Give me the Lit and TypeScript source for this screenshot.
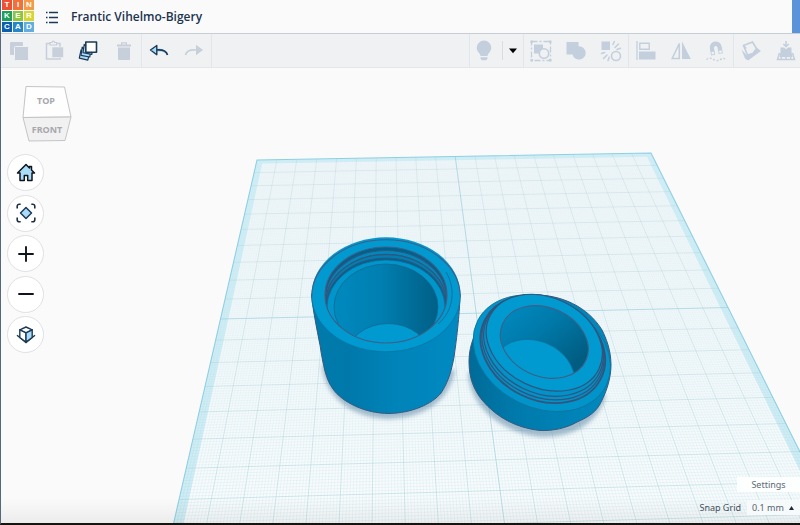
import { LitElement, html, svg, css } from "lit";
import type { TemplateResult } from "lit";
import { customElement } from "lit/decorators.js";

type Pt = [number, number];

/** Projective map from the unit square to four screen corners. */
function project(p00: Pt, p10: Pt, p01: Pt, p11: Pt) {
  const sx = p00[0] - p10[0] + p11[0] - p01[0];
  const sy = p00[1] - p10[1] + p11[1] - p01[1];
  const dx1 = p10[0] - p11[0], dy1 = p10[1] - p11[1];
  const dx2 = p01[0] - p11[0], dy2 = p01[1] - p11[1];
  const det = dx1 * dy2 - dx2 * dy1;
  const g = (sx * dy2 - dx2 * sy) / det;
  const h = (dx1 * sy - sx * dy1) / det;
  const a = p10[0] - p00[0] + g * p10[0], b = p01[0] - p00[0] + h * p01[0];
  const d = p10[1] - p00[1] + g * p10[1], e = p01[1] - p00[1] + h * p01[1];
  return (u: number, v: number) => {
    const w = g * u + h * v + 1;
    return `${((a * u + b * v + p00[0]) / w).toFixed(2)} ${((d * u + e * v + p00[1]) / w).toFixed(2)}`;
  };
}

// The corners describe the far half of the workplane, so v runs 0..2.
const plane = project([257, 160], [651, 153], [220.5, 319], [728, 307.5]);

function gridPath(step: number, skip: number): string {
  let d = "";
  const n = Math.round(1 / step);
  for (let i = 1; i < n; i++) {
    if (i % skip === 0) continue;
    const t = i * step;
    d += `M${plane(t, 0)}L${plane(t, 2)}M${plane(0, t * 2)}L${plane(1, t * 2)}`;
  }
  return d;
}
const quad = (m: number) =>
  `M${plane(m, m * 2)}L${plane(1 - m, m * 2)}L${plane(1 - m, 2 - m * 2)}L${plane(m, 2 - m * 2)}Z`;

const FINE = gridPath(1 / 200, 10);
const CELLS = gridPath(1 / 20, 10);
const AXES = `M${plane(0.5, 0)}L${plane(0.5, 2)}M${plane(0, 1)}L${plane(1, 1)}`;

const ICONS: Record<string, TemplateResult> = {
  copy: svg`<rect x="3" y="3" width="13" height="13" rx="1" fill="#c7d0da"/><rect x="7.5" y="7.5" width="14" height="14" rx="1" fill="#c7d0da" stroke="#f0f1f3"/>`,
  paste: svg`<path d="M8 4.5H4.5v15.500H18V4.500H15" fill="none" stroke="#c7d0da" stroke-width="1.500"/><path d="M8 6V3.500h2a1.300 1.300 0 0 1 2.600 0h2V6z" fill="#f0f1f3" stroke="#c7d0da" stroke-width="1.200"/><rect x="10" y="8" width="11.500" height="10.500" fill="#c7d0da" stroke="#f0f1f3" stroke-width=".6"/>`,
  duplicate: svg`<g stroke="#1c3a58" stroke-width="1.200" fill="#a9dcf8" stroke-linejoin="round"><path d="M4 11 2.300 19.200l8.500 2 1-4z"/><path d="M5.200 8.200 4 16.400l8.800 1.600.6-4z"/><path d="M7.200 5.500 6 13.700l8.800 1.600.5-3z"/><path d="M8.800 3h10.700v10.300H8.800z" fill="#fff" stroke-width="1.600"/></g>`,
  trash: svg`<path d="M5 5.500h4V3.300h6v2.200h4V7.500H5zM10.300 4.500v1h3.400v-1zM6 8.500h12V20a1 1 0 0 1-1 1H7a1 1 0 0 1-1-1z" fill="#c7d0da" fill-rule="evenodd"/>`,
  undo: svg`<path d="M9.500 9.500C16 9 20 11.500 20.500 16c-2.500-3-6-3.800-11-3.500z" fill="#a9dcf8"/><path d="M9.500 11C16 10.500 19.500 12 20.500 16" fill="none" stroke="#1c3a58" stroke-width="1.700"/><path d="M9.800 6.500 3.500 11l6.300 4.700z" fill="#a9dcf8" stroke="#1c3a58" stroke-width="1.400" stroke-linejoin="round"/>`,
  redo: svg`<path d="M14 11C8 10.500 4.500 12 3.500 16" fill="none" stroke="#c7d0da" stroke-width="1.700"/><path d="M14 5.800 21 11l-7 5.200z" fill="#c7d0da"/>`,
  bulb: svg`<path d="M12 1.500a7.300 7.300 0 0 1 7.300 7.300c0 4-3.300 5-3.800 8.200H8.500C8 13.800 4.700 12.800 4.700 8.800A7.300 7.300 0 0 1 12 1.500zM8.500 18.200h7v1.500l-1.500 1.500h-4l-1.500-1.500z" fill="#c3cfdc"/>`,
  group: svg`<rect x="2.500" y="2.500" width="19" height="19" fill="none" stroke="#c3cfdc" stroke-width="1.300" stroke-dasharray="6 2 2 2"/><path d="M1.500 1.500h2.500v2.500H1.500zM20 1.500h2.500v2.500H20zM1.500 20h2.500v2.500H1.500zM20 20h2.500v2.500H20z" fill="#c3cfdc"/><path d="M5 5.500h9v9H5z" fill="#c3cfdc"/><circle cx="15" cy="14.500" r="4.700" fill="#f0f1f3" stroke="#c3cfdc" stroke-width="1.600"/>`,
  union: svg`<path d="M2.500 3h12v4.200A6.700 6.700 0 1 1 8.500 15.500h-6z" fill="#c3cfdc"/>`,
  ungroup: svg`<path d="M2.500 2.500h8.500v8.500H2.500z" fill="#c3cfdc"/><circle cx="17" cy="17" r="4.500" fill="none" stroke="#c3cfdc" stroke-width="1.600"/><path d="M14 5.500l1.300-3M16 8.500l3.500-3.500M18 10.500l3.500-1.200M2.500 14.500l3.200-1M4.500 19.500l3.500-3.500M9 21.500l1.200-3.200" stroke="#c3cfdc" stroke-width="1.500" stroke-linecap="round"/>`,
  align: svg`<path d="M3 2v19" stroke="#c3cfdc" stroke-width="1.300"/><path d="M5.800 4.200h9.400v6H5.800z" fill="none" stroke="#c3cfdc" stroke-width="1.400"/><path d="M5 12.500h16.500v8H5z" fill="#c3cfdc"/>`,
  mirror: svg`<path d="M10.300 4.500v15H3.200z" fill="none" stroke="#c3cfdc" stroke-width="1.500"/><path d="M13 2.500 21.800 20H13z" fill="#c3cfdc"/>`,
  magnet: svg`<g transform="rotate(-10 12 10)"><path d="M6 15.500V8.500a6 6 0 0 1 12 0v7h-4.200V8.700a1.800 1.800 0 0 0-3.600 0v6.800z" fill="#c3cfdc"/><path d="M6.900 12.200h2.400v2.500H6.900zM14.700 12.200h2.400v2.500h-2.400z" fill="#f0f1f3"/></g><path d="M2.500 20.500C5 18.500 7.500 19 9.500 20.500s5 1.500 7 0 4-1.500 5.500 0" fill="none" stroke="#c3cfdc" stroke-width="1.400" stroke-dasharray="1.800 1.800"/>`,
  plane: svg`<path d="M2.500 10.500 6 19.500 9 21.500 22 12l-4.500-3.500-3 5-6.500 3z" fill="#c3cfdc"/><path d="M4.500 6.500 13.500 3l4 6.500-3.500 5-5.500 1.500z" fill="#f0f1f3" stroke="#c3cfdc" stroke-width="1.600"/><path d="M4.500 6.500l2.800 3" stroke="#c3cfdc" stroke-width="1.300"/>`,
  drop: svg`<path d="M12 2v5M9.300 5 12 7.500 14.700 5" fill="none" stroke="#c3cfdc" stroke-width="1.500"/><path d="M6.500 8.500h3.500l2 1.800 2-1.800h3.500v4.500l1 5h-13l1-5z" fill="#c3cfdc"/><path d="M5.500 14 3.500 20.500h17L18.500 14M7 20.500l.5-3M12 17v3.500M17 20.500l-.5-3" fill="none" stroke="#c3cfdc" stroke-width="1.500"/>`,
  home: svg`<path d="M12 3.500 3.500 12H6v7.500h4.300v-5h3.400v5H18V12h2.500L17.500 9V5.500h-2V7z" fill="#a9dcf8" stroke="#10151c" stroke-width="1.500" stroke-linejoin="round"/>`,
  fit: svg`<path d="M3.200 7.500V5.200a2 2 0 0 1 2-2h1.500M17.300 3.200h1.500a2 2 0 0 1 2 2v2.300M20.800 16.500v2.300a2 2 0 0 1-2 2h-1.500M6.700 20.800H5.200a2 2 0 0 1-2-2v-2.300" fill="none" stroke="#1c2f45" stroke-width="1.600"/><path d="M12 6.500 17.500 12 12 17.500 6.500 12z" fill="#a9dcf8" stroke="#1c3a58" stroke-width="1.500" stroke-linejoin="round"/>`,
  plus: svg`<path d="M12 5v14M5 12h14" stroke="#10151c" stroke-width="1.900" stroke-linecap="round"/>`,
  minus: svg`<path d="M5 12h14" stroke="#10151c" stroke-width="1.900" stroke-linecap="round"/>`,
  ortho: svg`<path d="M3 12.200 12 19.500 21 12.200" fill="none" stroke="#1c3a58" stroke-width="1.400"/><g stroke="#1c3a58" stroke-width="1.400" stroke-linejoin="round"><path d="M12 4 18.200 6.800 12 9.800 5.800 6.800z" fill="#fff"/><path d="M5.800 6.800 12 9.800v9.200l-6.200-4.500z" fill="#fff"/><path d="M18.200 6.800 12 9.800v9.200l6.200-4.500z" fill="#a9dcf8"/></g>`,
  list: svg`<path d="M9 7.500h9M9 12.500h9M9 17.500h9" stroke="#1c3a58" stroke-width="1.300"/><path d="M6 7.500h1.500M6 12.500h1.500M6 17.500h1.500" stroke="#1c3a58" stroke-width="1.300"/>`,
  caret: svg`<path d="M8 9.500h8l-4 4.800z" fill="#000"/>`,
};

const icon = (name: string) =>
  html`<svg class="icon" viewBox="0 0 24 24" aria-hidden="true">${ICONS[name]}</svg>`;

@customElement("work-scene")
export class WorkScene extends LitElement {
  static styles = css`
    :host { display: block; }
    .scene { display: block; width: 100%; height: 100%; }
    .edge { fill: none; stroke: #3f5f86; stroke-width: 1.1; }
  `;

  render() {
    return html`<svg class="scene" viewBox="0 68 800 455" preserveAspectRatio="xMinYMin slice" role="img" aria-label="Workplane with a threaded jar and lid">
      <defs>
        <linearGradient id="body" x1="0" x2="1"><stop offset="0" stop-color="#007aac"/><stop offset=".25" stop-color="#0078aa"/><stop offset=".55" stop-color="#0083b8"/><stop offset="1" stop-color="#008ac2"/></linearGradient>
        <linearGradient id="bore" x1="0" x2="1"><stop offset="0" stop-color="#0089be"/><stop offset=".45" stop-color="#007fb1"/><stop offset=".8" stop-color="#006a94"/><stop offset="1" stop-color="#006088"/></linearGradient>
        <linearGradient id="lidbody" x1="0" x2="1"><stop offset="0" stop-color="#006b98"/><stop offset=".3" stop-color="#0079aa"/><stop offset="1" stop-color="#0089bf"/></linearGradient>
        <linearGradient id="lidbore" x1="0" x2="1" y2=".4"><stop offset="0" stop-color="#008cc3"/><stop offset=".5" stop-color="#0078a8"/><stop offset="1" stop-color="#005c80"/></linearGradient>
        <linearGradient id="haze" x1="0" x2="0" y1="0" y2="1"><stop offset="0" stop-color="#888" stop-opacity="0"/><stop offset="1" stop-color="#888" stop-opacity=".12"/></linearGradient>
        <linearGradient id="floorplane" gradientUnits="userSpaceOnUse" x1="0" x2="0" y1="153" y2="523"><stop offset="0" stop-color="#ecf4f7"/><stop offset=".5" stop-color="#f1f8fa"/><stop offset="1" stop-color="#f9fcfd"/></linearGradient>
        <linearGradient id="fineline" gradientUnits="userSpaceOnUse" x1="0" x2="0" y1="153" y2="523"><stop offset="0" stop-color="#7fb9c8" stop-opacity=".01"/><stop offset=".4" stop-color="#7fb9c8" stop-opacity=".06"/><stop offset="1" stop-color="#7fb9c8" stop-opacity=".17"/></linearGradient>
        <linearGradient id="cellline" gradientUnits="userSpaceOnUse" x1="0" x2="0" y1="153" y2="523"><stop offset="0" stop-color="#a5c6cd" stop-opacity=".28"/><stop offset="1" stop-color="#96cbd4" stop-opacity=".5"/></linearGradient>
        <filter id="soft" x="-20%" y="-20%" width="140%" height="140%"><feGaussianBlur stdDeviation="2"/></filter>
        <clipPath id="mouth"><ellipse cx="386" cy="295" rx="61" ry="48"/></clipPath>
        <clipPath id="borehole"><ellipse cx="386" cy="307" rx="52" ry="43"/></clipPath>
        <clipPath id="lidhole"><ellipse rx="45.500" ry="34.400" transform="translate(544.300 342) rotate(23)"/></clipPath>
      </defs>

      <path d=${quad(0)} fill="#cfedf5"/>
      <path d=${quad(0.015)} fill="url(#floorplane)"/>
      <path d=${FINE} fill="none" stroke="url(#fineline)" stroke-width=".7"/>
      <path d=${CELLS} fill="none" stroke="url(#cellline)" stroke-width=".9"/>
      <path d=${AXES} fill="none" stroke="#94cbd8" stroke-opacity=".65" stroke-width="1"/>
      <path d=${quad(0)} fill="none" stroke="#8fcfe3" stroke-width="1.100"/>

      <g filter="url(#soft)" fill="#6d93ad" fill-opacity=".6">
        <path d="M322 365C324 395 350 418 388 419 425 418 450 400 455 370z"/>
        <path d="M468 372C470 412 510 436 545 437 580 436 600 418 606 395z"/>
      </g>

      <path d="M311.500 294C312 305 317 330 320 345 323 365 326 380 333 389 342 402 365 413.500 389 413.500 412 413 432 404 441 393 449 381 452 368 454 357 458 330 460 305 460 294z" fill="url(#body)" stroke="#35597f"/>
      <ellipse cx="386" cy="294.500" rx="74.300" ry="57.200" fill="#0099d0"/>
      <path d="M311.700 297C313 329 347 351.700 386 351.700S459 329 460.300 297" fill="none" stroke="#0d76a4" stroke-width=".8"/>
      <path d="M311.700 297A74.300 57.200 0 1 1 460.300 297" class="edge"/>
      <ellipse cx="386" cy="295" rx="61" ry="48" fill="#00618f"/>
      <g clip-path="url(#mouth)">
        <ellipse cx="386" cy="298" rx="60.500" ry="47.500" fill="#0087bb" stroke="#31557c" stroke-width="1.200"/>
        <ellipse cx="386" cy="302" rx="60" ry="47.500" fill="#0080b2" stroke="#31557c" stroke-width="1.300"/>
        <ellipse cx="386" cy="305.500" rx="59.500" ry="47.500" fill="#00628f" stroke="#31557c" stroke-width="1.200"/>
        <ellipse cx="386" cy="307.500" rx="59" ry="47.500" fill="#0096cc" stroke="#0b6c98" stroke-width=".7"/>
        <ellipse cx="386" cy="307" rx="52" ry="43" fill="url(#bore)" stroke="#17688f" stroke-width=".8"/>
        <g clip-path="url(#borehole)"><ellipse cx="388" cy="358" rx="42" ry="34.500" fill="#0099d0" stroke="#17688f" stroke-width=".8"/></g>
      </g>
      <ellipse cx="386" cy="295" rx="61" ry="48" class="edge"/>
      <path d="M446 272C456 288 454 311 438 324" fill="none" stroke="#1a668f" stroke-width=".8"/>

      <path d="M531.700 295C503 297 487 311 480 325 472 338 469 350 469 362 469 378 474 390 482 400 497 418 517 428 540 430.500 553 431 567 428 577 422 589 417 597 411 601 402 607 391 611 377 611 365 611 350 606 338 602 330 588 307 561 294 531.700 295z" fill="url(#lidbody)" stroke="#35597f"/>
      <ellipse rx="72" ry="54.200" transform="translate(541.800 353.300) rotate(27)" fill="#0094ca" stroke="#12719c" stroke-width=".8"/>
      <g fill="#0092c8" stroke="#31557c" stroke-width="1.200">
        <ellipse rx="65" ry="50.500" transform="translate(542.800 349.300) rotate(27)" stroke-width="1.800"/>
        <ellipse rx="63.700" ry="49" transform="translate(543 347.500) rotate(27)"/>
        <ellipse rx="62.300" ry="47.500" transform="translate(543.500 345.500) rotate(26)"/>
        <ellipse rx="60.600" ry="45.100" transform="translate(544.300 342.700) rotate(25.600)" fill="#0099d0"/>
      </g>
      <ellipse rx="45.500" ry="34.400" transform="translate(544.300 342) rotate(23)" fill="url(#lidbore)"/>
      <g clip-path="url(#lidhole)"><path d="M498 352C508 341 520 339 530 339.500 552 341 570 356 574 374L560 395 490 380z" fill="#0099d0" stroke="#12719c" stroke-width=".8"/></g>
      <ellipse rx="45.500" ry="34.400" transform="translate(544.300 342) rotate(23)" class="edge"/>
      <rect y="498" width="800" height="25" fill="url(#haze)"/>
    </svg>`;
  }
}

@customElement("app-root")
export class AppRoot extends LitElement {
  static styles = css`
    :host {
      display: flex;
      flex-direction: column;
      box-sizing: border-box;
      min-height: 100vh;
      border-left: 1px solid #56687c;
      border-bottom: 2px solid #17130f;
      background: #fafafa;
      color: #1c3350;
      font-family: "Noto Sans", "Open Sans", sans-serif;
      overflow: hidden;
    }
    button { border: 0; padding: 0; margin: 0; background: none; font: inherit; color: inherit; }
    .icon { display: block; width: 24px; height: 24px; flex: none; }
    header {
      display: flex;
      align-items: center;
      height: 33px;
      border-bottom: 1px solid #c6cdd4;
      background: #fafafb;
    }
    .logo {
      display: grid;
      grid-template-columns: repeat(3, 10px);
      grid-template-rows: repeat(3, 10px);
      gap: 1px;
      padding: 0 0 1px 1px;
      text-decoration: none;
    }
    .tile {
      display: flex;
      align-items: center;
      justify-content: center;
      color: #fff;
      font: 700 8px/10px "Liberation Sans", sans-serif;
    }
    .t0 { background: #ee5034; } .t1 { background: #f2703a; } .t2 { background: #f59a48; }
    .t3 { background: #1ea05a; } .t4 { background: #8cc63e; } .t5 { background: #d5d633; }
    .t6 { background: #0d5fae; } .t7 { background: #2687c6; } .t8 { background: #62aede; }
    .menu { margin-left: 6px; }
    .title { margin: 0 0 0 7px; font: 600 12px/16px "Open Sans", sans-serif; white-space: nowrap; }
    .panel { align-self: stretch; width: 8px; margin-left: auto; background: #5a93da; }
    .toolbar {
      display: flex;
      height: 33px;
      background: #f0f1f3;
      border-bottom: 1px solid #e4e6e9;
    }
    .set { display: flex; box-shadow: 1px 0 #e2e5e9; }
    .set.right { margin-left: auto; box-shadow: 1px 0 #e2e5e9, -1px 0 #e2e5e9; }
    .set.last { margin-right: -3px; }
    .tool { display: flex; align-items: center; justify-content: center; width: 35px; box-sizing: border-box; }
    .tool.bulb { width: 28px; }
    .tool.caret { width: 21px; margin: 7px 0 7px 4px; border-left: 1px solid #d9dde2; }
    main { position: relative; display: flex; flex: 1; justify-content: space-between; }
    work-scene { position: absolute; inset: 0; left: -1px; }
    .nav { position: relative; display: flex; flex-direction: column; padding: 17px 0 0 6px; gap: 12px; }
    .cube { display: block; width: 50px; height: 57px; margin-left: 15px; }
    .cubetext { font: 700 9px "Open Sans", sans-serif; fill: #a6a8ac; text-anchor: middle; }
    .views { display: flex; flex-direction: column; justify-content: space-between; height: 199px; }
    .round {
      display: flex;
      align-items: center;
      justify-content: center;
      box-sizing: border-box;
      width: 37px;
      height: 37px;
      border: 1px solid #dfe1e4;
      border-radius: 50%;
      background: #fff;
    }
    .corner {
      position: relative;
      display: flex;
      flex-direction: column;
      align-self: flex-end;
      align-items: flex-end;
      gap: 8px;
      padding-bottom: 8px;
      font-size: 9px;
      line-height: 15px;
    }
    .settings { width: 63px; height: 15px; background: #fdfefe; color: #5d6a78; }
    .snap { display: flex; align-items: center; gap: 6px; color: #3f4f60; }
    .field { display: flex; align-items: center; width: 53px; background: #f7fafb; }
    .field select {
      appearance: none;
      width: 100%;
      height: 15px;
      padding: 0 0 0 5px;
      border: 0;
      background: none;
      font: 9px/15px "Noto Sans", sans-serif;
      color: #56636f;
    }
    .up { flex: none; width: 5px; height: 4px; margin-right: 6px; }
  `;

  private tool(name: string, label: string, extra = "") {
    return html`<button class="tool ${extra}" aria-label=${label}>${icon(name)}</button>`;
  }

  private view(name: string, label: string) {
    return html`<button class="round" aria-label=${label}>${icon(name)}</button>`;
  }

  render() {
    return html`
      <header>
        <a class="logo" href="#" aria-label="Tinkercad">
          ${[..."TINKERCAD"].map((c, i) => html`<span class="tile t${i}">${c}</span>`)}
        </a>
        <button class="menu" aria-label="Designs">${icon("list")}</button>
        <h1 class="title">Frantic Vihelmo-Bigery</h1>
        <div class="panel"></div>
      </header>
      <div class="toolbar" role="toolbar">
        <div class="set">
          ${this.tool("copy", "Copy")}${this.tool("paste", "Paste")}${this.tool("duplicate", "Duplicate")}${this.tool("trash", "Delete")}
        </div>
        <div class="set">${this.tool("undo", "Undo")}${this.tool("redo", "Redo")}</div>
        <div class="set right">${this.tool("bulb", "Show all", "bulb")}${this.tool("caret", "Visibility options", "caret")}</div>
        <div class="set">${this.tool("group", "Group")}${this.tool("union", "Union")}${this.tool("ungroup", "Ungroup")}</div>
        <div class="set">${this.tool("align", "Align")}${this.tool("mirror", "Mirror")}${this.tool("magnet", "Snap")}</div>
        <div class="set last">${this.tool("plane", "Workplane")}${this.tool("drop", "Drop")}</div>
      </div>
      <main>
        <work-scene></work-scene>
        <div class="nav">
          <svg class="cube" viewBox="0 0 50 57">
            <path d="M4 1.500 42.500 2 49 32 1 32.500z" fill="#fefefe" stroke="#c3c5c8"/>
            <path d="M1 32.500 49 32 43 55.500 7 56z" fill="#f1f1f2" stroke="#c3c5c8"/>
            <text class="cubetext" x="24" y="19">TOP</text>
            <text class="cubetext" x="25" y="48">FRONT</text>
          </svg>
          <div class="views">
            ${this.view("home", "Home view")}${this.view("fit", "Fit view")}${this.view("plus", "Zoom in")}${this.view("minus", "Zoom out")}${this.view("ortho", "Switch projection")}
          </div>
        </div>
        <div class="corner">
          <button class="settings">Settings</button>
          <div class="snap">
            <label for="snap">Snap Grid</label>
            <div class="field">
              <select id="snap"><option>0.1 mm</option></select>
              <svg class="up" viewBox="0 0 5 4"><path d="M0 4h5L2.500 0z" fill="#1f2b38"/></svg>
            </div>
          </div>
        </div>
      </main>
    `;
  }
}
